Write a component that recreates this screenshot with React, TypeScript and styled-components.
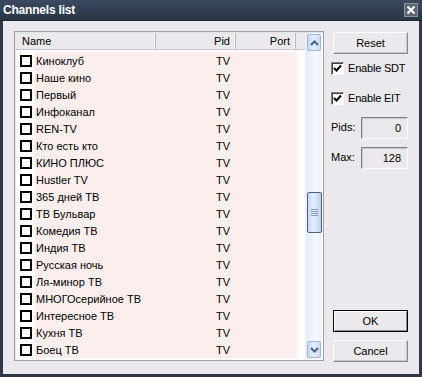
import React from "react";
import styled, { createGlobalStyle } from "styled-components";

const channels = [
  "Киноклуб",
  "Наше кино",
  "Первый",
  "Инфоканал",
  "REN-TV",
  "Кто есть кто",
  "КИНО ПЛЮС",
  "Hustler TV",
  "365 дней ТВ",
  "ТВ Бульвар",
  "Комедия ТВ",
  "Индия ТВ",
  "Русская ночь",
  "Ля-минор ТВ",
  "МНОГОсерийное ТВ",
  "Интересное ТВ",
  "Кухня ТВ",
  "Боец ТВ",
];

const GlobalStyle = createGlobalStyle`
  html, body {
    margin: 0;
    padding: 0;
    background: #ebe9ed;
  }
  * {
    box-sizing: border-box;
  }
`;

export default function App() {
  return (
    <>
      <GlobalStyle />
      <Window>
        <TitleBar>
          <Title>Channels list</Title>
          <CloseButton>
            <svg width="10" height="10" viewBox="0 0 10 10">
              <path d="M1.5 1.5 L8.5 8.5 M8.5 1.5 L1.5 8.5" stroke="#fff" strokeWidth="2.2" />
            </svg>
          </CloseButton>
        </TitleBar>
        <Body>
          <ListView>
            <ListContent>
              <Header>
                <HeaderCell $width={140}>Name</HeaderCell>
                <HeaderCell $width={80} $right>
                  Pid
                </HeaderCell>
                <HeaderCell $width={60} $right>
                  Port
                </HeaderCell>
                <HeaderFill />
              </Header>
              <Rows>
                {channels.map((name) => (
                  <Row key={name}>
                    <CheckCell>
                      <RowCheck />
                    </CheckCell>
                    <NameCell>{name}</NameCell>
                    <PidCell>TV</PidCell>
                    <PortCell />
                  </Row>
                ))}
              </Rows>
            </ListContent>
            <ScrollBar>
              <ScrollButton>
                <svg width="9" height="6" viewBox="0 0 9 6">
                  <path d="M1 5 L4.5 1.5 L8 5" stroke="#4d6185" strokeWidth="2" fill="none" />
                </svg>
              </ScrollButton>
              <Track>
                <Thumb>
                  <Grip />
                  <Grip />
                  <Grip />
                  <Grip />
                </Thumb>
              </Track>
              <ScrollButton>
                <svg width="9" height="6" viewBox="0 0 9 6">
                  <path d="M1 1 L4.5 4.5 L8 1" stroke="#4d6185" strokeWidth="2" fill="none" />
                </svg>
              </ScrollButton>
            </ScrollBar>
          </ListView>
          <Side>
            <Button>Reset</Button>
            <CheckRow>
              <CheckBox>
                <svg width="9" height="9" viewBox="0 0 9 9">
                  <path d="M1 4 L3.5 6.5 L8 1.5" stroke="#000" strokeWidth="2" fill="none" />
                </svg>
              </CheckBox>
              <span>Enable SDT</span>
            </CheckRow>
            <CheckRow>
              <CheckBox>
                <svg width="9" height="9" viewBox="0 0 9 9">
                  <path d="M1 4 L3.5 6.5 L8 1.5" stroke="#000" strokeWidth="2" fill="none" />
                </svg>
              </CheckBox>
              <span>Enable EIT</span>
            </CheckRow>
            <FieldRow>
              <FieldLabel>Pids:</FieldLabel>
              <Field>0</Field>
            </FieldRow>
            <FieldRow>
              <FieldLabel>Max:</FieldLabel>
              <Field>128</Field>
            </FieldRow>
            <Spacer />
            <Button $default>OK</Button>
            <Button>Cancel</Button>
          </Side>
        </Body>
      </Window>
    </>
  );
}

const Window = styled.div`
  width: 422px;
  height: 377px;
  display: flex;
  flex-direction: column;
  background: #ebe9ed;
  border: 3px solid #2e3847;
  border-top: none;
  font-family: "Liberation Sans", Arial, sans-serif;
  font-size: 11px;
  color: #000;
`;

const TitleBar = styled.div`
  height: 21px;
  margin: 0 -3px;
  display: flex;
  align-items: center;
  justify-content: space-between;
  padding: 0 4px 0 3px;
  background: linear-gradient(#3a4a60, #2a3545);
  border-bottom: 1px solid #1f2733;
`;

const Title = styled.div`
  color: #fff;
  font-weight: bold;
  font-size: 12px;
  letter-spacing: -0.2px;
`;

const CloseButton = styled.div`
  width: 14px;
  height: 14px;
  display: flex;
  align-items: center;
  justify-content: center;
  background: #5a6474;
  border: 1px solid #8a929e;
`;

const Body = styled.div`
  flex: 1;
  display: flex;
  padding: 10px 11px 12px 11px;
  gap: 7px;
`;

const ListView = styled.div`
  width: 310px;
  height: 330px;
  display: flex;
  background: #fff;
  border: 1px solid #a0a0a0;
  box-shadow: inset 1px 1px 0 #e4e4e4;
  padding: 1px;
`;

const ListContent = styled.div`
  flex: 1;
  display: flex;
  flex-direction: column;
  overflow: hidden;
`;

const Header = styled.div`
  display: flex;
  height: 17px;
  background: #ebe9ed;
  border-bottom: 1px solid #c8c6cc;
`;

const HeaderCell = styled.div<{ $width: number; $right?: boolean }>`
  width: ${(p) => p.$width}px;
  display: flex;
  align-items: center;
  justify-content: ${(p) => (p.$right ? "flex-end" : "flex-start")};
  padding: 0 5px 0 6px;
  border-right: 1px solid #b8b6bc;
  box-shadow: inset -1px 0 0 #fff;
`;

const HeaderFill = styled.div`
  flex: 1;
`;

const Rows = styled.div`
  display: flex;
  flex-direction: column;
  padding-top: 2px;
`;

const Row = styled.div`
  display: flex;
  height: 17px;
  align-items: center;
`;

const CheckCell = styled.div`
  width: 19px;
  height: 100%;
  display: flex;
  align-items: center;
  padding-left: 4px;
  background: #fff;
`;

const RowCheck = styled.div`
  width: 12px;
  height: 12px;
  border: 2px solid #000;
  background: #fff;
`;

const NameCell = styled.div`
  width: 121px;
  height: 100%;
  display: flex;
  align-items: center;
  padding-left: 1px;
  background: #fdeeee;
  white-space: nowrap;
`;

const PidCell = styled.div`
  width: 80px;
  height: 100%;
  display: flex;
  align-items: center;
  justify-content: flex-end;
  padding-right: 6px;
  background: #fdeeee;
`;

const PortCell = styled.div`
  width: 61px;
  height: 100%;
  background: #fdeeee;
`;

const ScrollBar = styled.div`
  width: 17px;
  display: flex;
  flex-direction: column;
  background: linear-gradient(90deg, #e3edfb, #f5f8fd 60%, #eef3fb);
  border-left: 1px solid #f0f0f0;
`;

const ScrollButton = styled.div`
  height: 17px;
  margin: 1px;
  display: flex;
  align-items: center;
  justify-content: center;
  border: 1px solid #a4b7d2;
  border-radius: 2px;
  background: linear-gradient(90deg, #c8daf6, #e4eefd 50%, #c9dbf5);
`;

const Track = styled.div`
  flex: 1;
  display: flex;
  flex-direction: column;
  padding-top: 140px;
`;

const Thumb = styled.div`
  height: 41px;
  margin: 0 0 0 1px;
  display: flex;
  flex-direction: column;
  align-items: center;
  justify-content: center;
  gap: 1px;
  border: 1px solid #4e607e;
  border-radius: 2px;
  background: linear-gradient(90deg, #c5d9f8, #e6effd 45%, #b9cff0);
`;

const Grip = styled.div`
  width: 7px;
  height: 1px;
  background: #8a9ab4;
`;

const Side = styled.div`
  flex: 1;
  min-width: 0;
  display: flex;
  flex-direction: column;
  padding-top: 1px;
`;

const Button = styled.div<{ $default?: boolean }>`
  height: 22px;
  margin-left: 2px;
  display: flex;
  align-items: center;
  justify-content: center;
  background: #ebe9ed;
  border: 1px solid ${(p) => (p.$default ? "#000" : "#8c8a90")};
  border-top-color: ${(p) => (p.$default ? "#000" : "#fff")};
  border-left-color: ${(p) => (p.$default ? "#000" : "#fff")};
  box-shadow: ${(p) =>
    p.$default ? "inset 1px 1px 0 #fff, inset -1px -1px 0 #8c8a90" : "inset -1px -1px 0 #c8c6cc"};
  & + & {
    margin-top: 8px;
  }
`;

const CheckRow = styled.div`
  display: flex;
  align-items: center;
  gap: 4px;
  height: 14px;
  margin-top: 7px;
  white-space: nowrap;
  letter-spacing: -0.2px;
  & + & {
    margin-top: 16px;
  }
`;

const CheckBox = styled.div`
  flex: none;
  width: 13px;
  height: 13px;
  display: flex;
  align-items: center;
  justify-content: center;
  background: #fff;
  border: 1px solid #fff;
  border-top-color: #808080;
  border-left-color: #808080;
  box-shadow: inset 1px 1px 0 #404040;
`;

const FieldRow = styled.div`
  display: flex;
  align-items: center;
  justify-content: space-between;
  margin-top: 12px;
  & + & {
    margin-top: 8px;
  }
`;

const FieldLabel = styled.div`
  padding-bottom: 3px;
`;

const Field = styled.div`
  width: 47px;
  height: 22px;
  display: flex;
  align-items: center;
  justify-content: flex-end;
  padding-right: 6px;
  background: #ebe9ed;
  border: 1px solid #fff;
  border-top-color: #808080;
  border-left-color: #808080;
  box-shadow: inset 1px 1px 0 #c8c6cc;
`;

const Spacer = styled.div`
  flex: 1;
`;
